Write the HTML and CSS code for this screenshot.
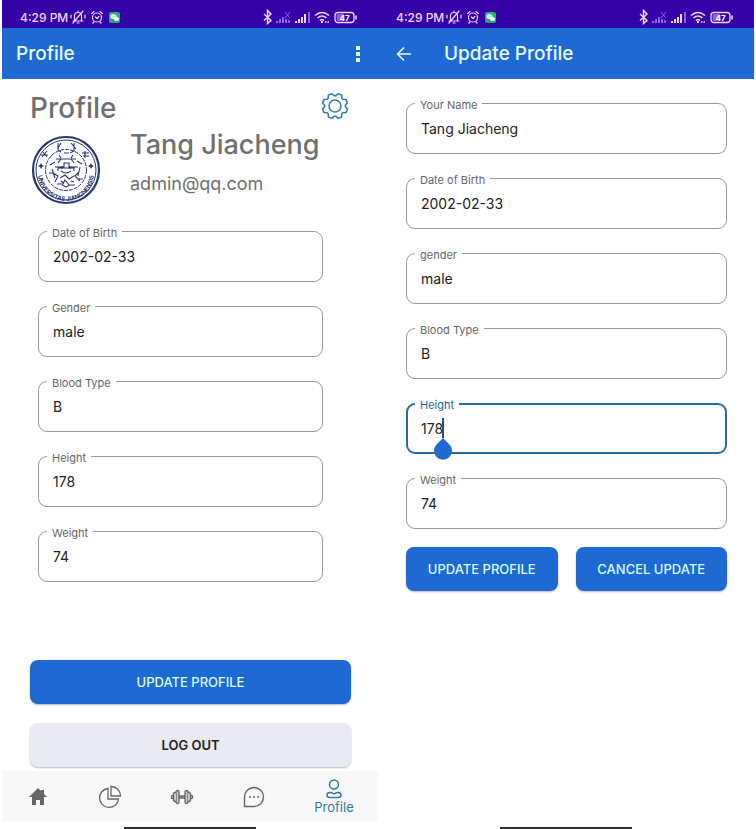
FILE: index.html
```html
<!DOCTYPE html>
<html lang="en">
<head>
<meta charset="utf-8">
<meta name="viewport" content="width=device-width, initial-scale=1">
<title>Profile</title>
<link rel="stylesheet" href="styles.css">
</head>
<body>
<svg class="sprite" aria-hidden="true">
  <symbol id="i-left" viewBox="0 0 52 16">
    <g fill="none" stroke="currentColor" stroke-width="1.2" stroke-linecap="round" stroke-linejoin="round">
      <path d="M3 12h10M4.500 11.500V7a3.500 3.500 0 0 1 7 0v4.500M7 14h2M13 2 3 14M1 6v3M15 6v3M8 2v1"/>
      <circle cx="27" cy="8.500" r="4.500"/><path d="M25.500 8 27 9.500l2-2M21.500 4.500 24 2.500M32.500 4.500 30 2.500M24 13l-1 1M30 13l1 1"/>
    </g>
    <rect x="39" y="3" width="11" height="11" rx="2" fill="#2fa878"/>
    <ellipse cx="43.500" cy="7.500" rx="3.200" ry="2.500" fill="#c6f7dc"/><ellipse cx="46.500" cy="10" rx="2.700" ry="2" fill="#e6fff0"/>
  </symbol>
  <symbol id="i-right" viewBox="0 0 96 16">
    <path d="m2 5 7 6.500-3.500 3V1.500L9 5l-7 6.500" fill="none" stroke="currentColor" stroke-width="1.500"/>
    <g fill="#8a5fe0"><path d="M14 12h2v2h-2zM17 10h2v4h-2zM20 8h2v6h-2zM23 10h2v4h-2zM26 11h2v3h-2z"/><path d="m23 3 5 6M28 3l-5 6" stroke="#8a5fe0"/></g>
    <g fill="currentColor"><path d="M33 12h2v2h-2zM36 10h2v4h-2zM39 8h2v6h-2zM42 5h2v9h-2z"/><path d="M46 3h2v11h-2z" fill="#8a5fe0"/></g>
    <g fill="none" stroke="currentColor" stroke-width="1.600"><path d="M53 6.500q7-6 14 0M55.500 9q4.500-4 9 0M58 11.500q2-2 4 0"/><path d="M63 13h4" stroke-dasharray="1.500 1"/></g>
    <circle cx="60" cy="13" r="1.200" fill="currentColor"/>
    <rect x="73" y="3.500" width="19" height="10" rx="3" fill="none" stroke="currentColor" stroke-width="1.300"/>
    <rect x="74.500" y="5" width="8" height="7" rx="1.500" fill="#8a5fe0"/>
    <path d="M94 6.500v4" stroke="currentColor" stroke-width="1.500"/>
    <text x="82.500" y="11.500" text-anchor="middle" class="charge">47</text>
  </symbol>
</svg>
<div class="screens">
  <section class="phone" aria-label="Profile">
    <div class="status"><span>4:29 PM</span><svg class="st-left"><use href="#i-left"/></svg><svg class="st-right"><use href="#i-right"/></svg></div>
    <header class="bar">
      <h1>Profile</h1>
      <button class="icon more" aria-label="More options"><svg viewBox="0 0 8 18"><path d="M2 1h4v4H2zM2 7h4v4H2zM2 13h4v4H2z" fill="currentColor"/></svg></button>
    </header>
    <main class="view">
      <div class="heading">
        <h2>Profile</h2>
        <button class="icon gear" aria-label="Settings"><svg viewBox="0 0 28 28" fill="none" stroke="currentColor" stroke-width="1.500" stroke-linejoin="round"><path d="M14.700 3.700 17.100 1.600 20.600 3l.2 3.200 1 1 3.200.2 1.400 3.500-2.100 2.400v1.400l2.100 2.400-1.400 3.500-3.200.2-1 1-.2 3.200-3.500 1.400-2.400-2.100h-1.400l-2.400 2.100L7.400 25l-.2-3.200-1-1-3.200-.2-1.400-3.500 2.100-2.400v-1.400l-2.100-2.400L3 7.400l3.200-.2 1-1L7.400 3l3.500-1.400 2.400 2.100z"/><circle cx="14" cy="14" r="6"/></svg></button>
      </div>
      <div class="person">
        <svg class="seal" viewBox="0 0 70 70" role="img" aria-label="University seal">
          <circle cx="35" cy="35" r="33" fill="#fff" stroke="#28386a" stroke-width="2.200"/>
          <circle cx="35" cy="35" r="30" fill="none" stroke="#28386a"/>
          <circle cx="35" cy="35" r="20.500" fill="none" stroke="#28386a" stroke-dasharray="4 1"/>
          <path id="arc" d="M7 38a28 28 0 0 0 56 0" fill="none"/>
          <text class="motto"><textPath href="#arc" startOffset="50%" text-anchor="middle">UNIVERSITAS JIANGNENSIS</textPath></text>
          <g fill="none" stroke="#28386a" stroke-width="1.100"><path d="M27 8v7l3 2M30 8l-3 5M43 8v8l-4 2M40 8l5 6M33 18h5M12 17l4 5M16 16l-5 6M10 20h7M54 16v7M51 18h7M52 21h6"/><path d="M25 24h20M27 28l3-4h10l3 4M24 32h9v-4h5v4h9M27 36v-3h16v3M30 36q5 4 10 0M31 31v3M39 31v3M22 38l5 3-3 6M48 37l-4 4 5 5M29 43l5-3 4 4 5-3M26 49h6l2-4 4 5h6M21 34l3 9M49 32l-2 9M31 50l4 2 4-2M19 30l5-3M51 29l-5-3M28 20l2 3M42 20l-2 3M18 38h5M47 44h5M30 46l3 2M40 46l3 1"/></g>
          <g fill="#28386a"><path d="m10 28 1 2 2 1-2 1-1 2-1-2-2-1 2-1zM60 28l1 2 2 1-2 1-1 2-1-2-2-1 2-1z"/></g>
        </svg>
        <div><p class="name">Tang Jiacheng</p><p class="mail">admin@qq.com</p></div>
      </div>
      <div class="fields inset">
        <div class="field"><label for="a1">Date of Birth</label><input id="a1" value="2002-02-33" readonly></div>
        <div class="field"><label for="a2">Gender</label><input id="a2" value="male" readonly></div>
        <div class="field"><label for="a3">Blood Type</label><input id="a3" value="B" readonly></div>
        <div class="field"><label for="a4">Height</label><input id="a4" value="178" readonly></div>
        <div class="field"><label for="a5">Weight</label><input id="a5" value="74" readonly></div>
      </div>
      <div class="stack">
        <button class="btn">UPDATE PROFILE</button>
        <button class="btn plain">LOG OUT</button>
      </div>
    </main>
    <nav class="tabs">
      <a href="#" aria-label="Home"><svg viewBox="0 0 24 24"><path d="M12 3 3 12h3v8h4v-5h4v5h4v-8h3l-3-3V5h-3v1z" fill="currentColor"/></svg></a>
      <a href="#" aria-label="Statistics"><svg viewBox="0 0 24 24" fill="none" stroke="currentColor" stroke-width="1.300"><path d="M10 3.500A9.500 9.500 0 1 0 20.500 14H10zM13 1.500V11h9.500A9.500 9.500 0 0 0 13 1.500z"/></svg></a>
      <a href="#" aria-label="Workout"><svg viewBox="0 0 24 24" fill="#ccc" stroke="currentColor" stroke-width="1.300"><path d="M9 11h6v2H9z"/><rect x="6" y="5.500" width="3" height="13" rx="1.500"/><rect x="15" y="5.500" width="3" height="13" rx="1.500"/><path d="M6 7.500H4.500l-1 1v7l1 1H6M18 7.500h1.500l1 1v7l-1 1H18M3.500 10l-2 1v2l2 1M20.500 10l2 1v2l-2 1"/></svg></a>
      <a href="#" aria-label="Messages"><svg viewBox="0 0 24 24" fill="none" stroke="currentColor" stroke-width="1.400"><path d="M2.500 21.500V12a9.500 9.500 0 1 1 9.500 9.500z"/><path d="M7 12h2M11 12h2M15 12h2"/></svg></a>
      <a href="#" class="on"><svg viewBox="0 0 20 20" fill="none" stroke="currentColor" stroke-width="1.500"><circle cx="10" cy="5.500" r="4.500"/><path d="M6 13.500q2 0 3 1 1 .6 2 0 1-1 3-1 3 0 3 2.500T14 18.500H6Q3 18.500 3 16t3-2.500z"/></svg><span>Profile</span></a>
    </nav>
    <div class="home"></div>
  </section>
  <section class="phone" aria-label="Update Profile">
    <div class="status"><span>4:29 PM</span><svg class="st-left"><use href="#i-left"/></svg><svg class="st-right"><use href="#i-right"/></svg></div>
    <header class="bar">
      <button class="icon back" aria-label="Back"><svg viewBox="0 0 16 16" fill="none" stroke="currentColor" stroke-width="1.600"><path d="M15 8H2M8 1.500 1.500 8 8 14.500"/></svg></button>
      <h1>Update Profile</h1>
    </header>
    <main class="edit">
      <form>
        <div class="fields">
          <div class="field"><label for="b0">Your Name</label><input id="b0" value="Tang Jiacheng"></div>
          <div class="field"><label for="b1">Date of Birth</label><input id="b1" value="2002-02-33"></div>
          <div class="field"><label for="b2">gender</label><input id="b2" value="male"></div>
          <div class="field"><label for="b3">Blood Type</label><input id="b3" value="B"></div>
          <div class="field active"><label for="b4">Height</label><input id="b4" value="178"><svg class="caret" viewBox="0 0 20 42" aria-hidden="true"><path d="M10 0v20" stroke="#1b4f8d" stroke-width="2"/><path d="m10 20 6 6a9 9 0 1 1-12 0z" fill="#1e6ad2"/></svg></div>
          <div class="field"><label for="b5">Weight</label><input id="b5" value="74"></div>
        </div>
        <div class="pair">
          <button class="btn" type="button">UPDATE PROFILE</button>
          <button class="btn" type="button">CANCEL UPDATE</button>
        </div>
      </form>
    </main>
    <div class="home"></div>
  </section>
</div>
</body>
</html>
```
FILE: styles.css
```css
* { box-sizing: border-box; }
body { margin: 0; background: #fff; color: #222; font-family: Inter, "Liberation Sans", sans-serif; }
h1, h2, p { margin: 0; font-weight: 500; }
.sprite { display: none; }
.screens { display: grid; grid-template-columns: 1fr 1fr; min-height: 100vh; padding: 0 2px; }
.phone { display: flex; flex-direction: column; }
.status { display: flex; align-items: center; height: 28px; padding: 6px 20px 0 18px; background: #3502a8; color: #f0d4fb; font-size: 12px; font-weight: 500; }
.st-left { width: 52px; height: 16px; margin-left: 2px; }
.st-right { width: 96px; height: 16px; margin-left: auto; }
.charge { font-size: 8px; font-weight: 700; fill: #fff; }
.bar { display: flex; align-items: center; height: 51px; padding: 0 16px 0 14px; background: #1e6ad2; color: #e4fbff; }
.bar h1 { font-size: 19px; line-height: 24px; }
.icon { display: block; padding: 0; border: 0; background: none; color: inherit; }
.icon svg { display: block; width: 100%; height: 100%; }
.more { width: 8px; height: 18px; margin-left: auto; }
.back { width: 16px; height: 16px; margin: 0 32px 0 4px; }
.view { display: flex; flex: 1; flex-direction: column; padding: 12px 27px 4px 28px; }
.heading { display: flex; justify-content: space-between; height: 32px; color: #707070; }
h2 { font-size: 28px; line-height: 34px; }
.gear { width: 28px; height: 28px; margin: 1px 2px 0 0; color: #2c7fa5; }
.person { display: flex; gap: 29px; margin-top: 6px; color: #707070; }
.seal { width: 70px; height: 70px; margin: 6px 0 1px 1px; }
.motto { fill: #28386a; font-size: 6px; font-weight: 700; }
.name { font-size: 27px; line-height: 32px; }
.mail { margin-top: 13px; font-size: 18px; font-weight: 400; line-height: 20px; }
.fields { display: grid; gap: 24px; }
.inset { margin: 25px 28px 24px 8px; }
.field { position: relative; height: 51px; }
.field label { position: absolute; top: -6px; left: 9px; padding: 1px 5px 0; background: #fff; color: #666; font-size: 11px; line-height: 14px; }
.field input { display: block; width: 100%; height: 100%; padding: 0 14px; border: 1px solid #999; border-radius: 9px; outline: 0; background: #fff; color: #222; font: 14px Inter, sans-serif; }
.active label { color: #2b648f; }
.active input { border: 2px solid #2b6c98; padding: 0 13px; }
.caret { position: absolute; top: 15px; left: 27px; width: 20px; height: 42px; }
.btn { height: 44px; border: 0; border-radius: 8px; background: #1e6ad2; color: #d9fbff; font: 500 13px Inter, sans-serif; box-shadow: 0 1px 2px #b5bac5; }
.plain { background: #eaeaf1; color: #222; font-weight: 600; }
.stack { display: grid; gap: 19px; margin-top: auto; }
.tabs { display: grid; grid-template-columns: 9fr 9fr 9fr 9fr 11fr; align-items: center; height: 51px; background: #f8f8f8; }
.tabs a { display: flex; flex-direction: column; align-items: center; color: #666; text-decoration: none; font-size: 13px; line-height: 16px; }
.tabs svg { width: 24px; height: 24px; }
.tabs .on { color: #347a9e; }
.tabs .on svg { width: 20px; height: 20px; }
.home { width: 132px; height: 2px; margin: 5px auto 0; background: #302c30; }
.edit { flex: 1; padding: 24px 27px 0 28px; }
.pair { display: grid; grid-template-columns: 1fr 1fr; gap: 18px; margin-top: 18px; }
```
